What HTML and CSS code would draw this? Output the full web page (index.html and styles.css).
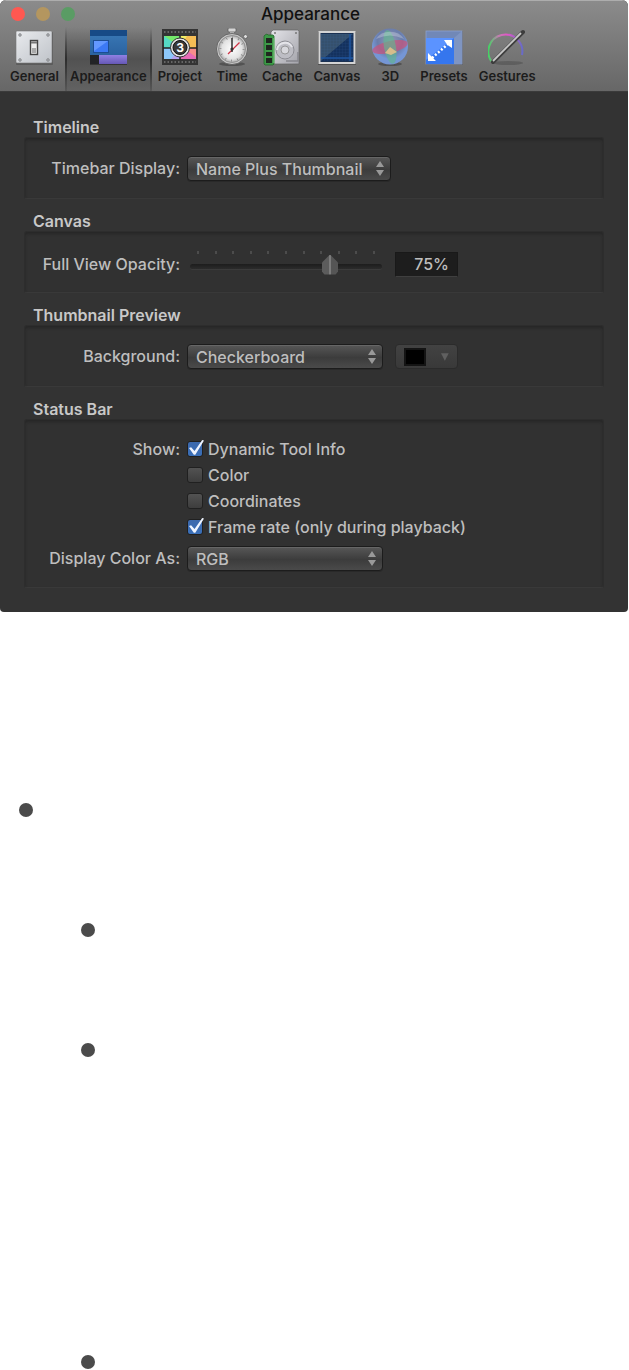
FILE: index.html
```html
<!DOCTYPE html>
<html lang="en">
<head>
    <meta charset="UTF-8">
    <meta name="viewport" content="width=device-width, initial-scale=1.0">
    <title>Appearance</title>
    <link rel="stylesheet" href="styles.css">
</head>
<body>
    <!-- Preferences Window -->
    <main class="window">
        <header class="window-header">
            <div class="titlebar">
                <div class="lights">
                    <button class="light close" aria-label="Close"></button>
                    <button class="light minimize" aria-label="Minimize"></button>
                    <button class="light expand" aria-label="Zoom"></button>
                </div>
                <h1>Appearance</h1>
            </div>

            <!-- Toolbar -->
            <nav class="toolbar">
                <button class="tool">
                    <svg viewBox="0 0 38 38">
                        <defs>
                            <linearGradient id="plate" x2="1" y2="1"><stop stop-color="#e9ebee"/><stop offset="1" stop-color="#bfc3c9"/></linearGradient>
                        </defs>
                        <rect x="1" y="4" width="37" height="33" rx="1" fill="#444" opacity=".5"/>
                        <rect x="1" y="3" width="36" height="32" rx="1" fill="url(#plate)" stroke="#777" stroke-width=".6"/>
                        <g fill="#a4a8ae" stroke="#777" stroke-width=".5"><circle cx="5" cy="7" r="1.4"/><circle cx="33" cy="7" r="1.4"/><circle cx="5" cy="32" r="1.4"/><circle cx="33" cy="32" r="1.4"/></g>
                        <rect x="15.500" y="12.500" width="7" height="14" fill="#eee" stroke="#444" stroke-width="1.4"/>
                        <rect x="17" y="20" width="4" height="5" fill="#aaa"/>
                        <path d="M16 14.500h6" stroke="#777" stroke-width="2"/>
                    </svg>
                    General
                </button>
                <button class="tool selected" aria-pressed="true">
                    <svg viewBox="0 0 38 38">
                        <defs>
                            <linearGradient id="pane" x2="0" y2="1"><stop stop-color="#3b7ab8"/><stop offset="1" stop-color="#255a97"/></linearGradient>
                            <linearGradient id="strip" x2="0" y2="1"><stop stop-color="#9080e4"/><stop offset="1" stop-color="#6658b4"/></linearGradient>
                        </defs>
                        <rect x="1" y="3" width="37" height="34" fill="#222" opacity=".6"/>
                        <rect x="1" y="2" width="37" height="34" fill="url(#pane)"/>
                        <rect x="1" y="2" width="37" height="6" fill="#174a86"/>
                        <rect x="4" y="12" width="16" height="13" fill="#1d4d93"/>
                        <rect x="5" y="13" width="14" height="11" fill="#3c79f5"/>
                        <path d="M5 13h14L5 23z" fill="#6398ff"/>
                        <rect x="1" y="27" width="9" height="9" fill="#222326"/>
                        <rect x="10" y="27" width="28" height="9" fill="url(#strip)"/>
                    </svg>
                    Appearance
                </button>
                <button class="tool">
                    <svg viewBox="0 0 38 38">
                        <rect x="1" y="1" width="36" height="36" fill="#343434"/>
                        <path d="M3 4h32M3 34h32" stroke="#666" stroke-width="2" stroke-dasharray="1.5 2"/>
                        <path d="M3 8h16v12H3z" fill="#55d9c5"/>
                        <path d="M19 8h16v12H19z" fill="#f5bd55"/>
                        <path d="M3 20h16v11H3z" fill="#8dc8fa"/>
                        <path d="M19 20h16v11H19z" fill="#e66bb7"/>
                        <path d="M3 8l16 11V8z" fill="#75e96c"/>
                        <path d="M19 8l7 0-7 11z" fill="#f0ed65"/>
                        <path d="M35 20H22l13 9z" fill="#f78d8b"/>
                        <path d="M19 20v11h-9z" fill="#b6a2f0"/>
                        <path d="M2 20h34M19 7v25" stroke="#222" stroke-width="1.500"/>
                        <circle cx="19" cy="19.500" r="9.500" fill="#e4e4e4" stroke="#333"/>
                        <circle cx="19" cy="19.500" r="7" fill="#383838" stroke="#111"/>
                        <text x="19" y="24" class="countdown">3</text>
                    </svg>
                    Project
                </button>
                <button class="tool">
                    <svg viewBox="0 0 38 38">
                        <defs>
                            <radialGradient id="dial"><stop stop-color="#fff"/><stop offset=".75" stop-color="#e2e2e2"/><stop offset="1" stop-color="#aaa"/></radialGradient>
                        </defs>
                        <ellipse cx="19" cy="36" rx="13" ry="2" fill="#333" opacity=".5"/>
                        <path d="M31 10l3-3" stroke="#bbb" stroke-width="3"/>
                        <circle cx="32.500" cy="8.500" r="2" fill="#ddd" stroke="#555" stroke-width=".8"/>
                        <rect x="15" y="0" width="8" height="4" rx="1" fill="#d5d5d5" stroke="#555" stroke-width=".7"/>
                        <rect x="17" y="4" width="4" height="3" fill="#aaa"/>
                        <circle cx="19" cy="21" r="15.500" fill="#c7c7c7" stroke="#555" stroke-width=".8"/>
                        <circle cx="19" cy="21" r="13.500" fill="url(#dial)" stroke="#777" stroke-width=".6"/>
                        <circle cx="19" cy="21" r="11.500" fill="none" stroke="#777" stroke-width="2" stroke-dasharray=".7 5.320"/>
                        <path d="M15 26L26.500 14.500" stroke="#cf3446" stroke-width="1.300"/>
                        <path d="M19 24V10" stroke="#222" stroke-width="1.400"/>
                        <circle cx="19" cy="21" r="1.600" fill="#333"/>
                    </svg>
                    Time
                </button>
                <button class="tool">
                    <svg viewBox="0 0 38 38">
                        <defs>
                            <linearGradient id="disk" x2="1" y2="1"><stop stop-color="#e4e4e9"/><stop offset="1" stop-color="#a3a3aa"/></linearGradient>
                        </defs>
                        <path d="M10 2h25l1 1v33H8V4z" fill="url(#disk)" stroke="#666" stroke-width=".7"/>
                        <circle cx="22" cy="22" r="9" fill="#bdbdc4" stroke="#8c8c93"/>
                        <path d="M14 22a8 8 0 0 1 15-3" fill="none" stroke="#e4e4e9" stroke-width="2"/>
                        <circle cx="22" cy="22" r="4" fill="#d8d8dd" stroke="#888" stroke-width=".8"/>
                        <path d="M23 33h12v-9" fill="none" stroke="#86868d" stroke-width="1.500"/>
                        <g fill="#777"><circle cx="12" cy="5" r="1"/><circle cx="33" cy="5" r="1"/></g>
                        <path d="M2 7l2-1 1 1h5l1 1v28l-1 1H2l-1-1V8z" fill="#3d9a48" stroke="#24682c" stroke-width=".8"/>
                        <path d="M11 10v25" stroke="#7bc67f" stroke-width="1.200"/>
                        <path d="M3 10h6v5H3zM3 17h6v5H3zM3 24h6v4H3zM3 30h6v5H3z" fill="#202820"/>
                    </svg>
                    Cache
                </button>
                <button class="tool">
                    <svg viewBox="0 0 38 38">
                        <defs>
                            <pattern id="mesh" width="3" height="3" patternUnits="userSpaceOnUse"><path d="M0 0h3M0 0v3" stroke="#3f6fa9" stroke-width=".6"/></pattern>
                        </defs>
                        <rect x="0" y="4" width="38" height="33" fill="#333" opacity=".5"/>
                        <rect x="1.500" y="4" width="35" height="31" fill="#1b3152" stroke="#d4d4d4" stroke-width="2"/>
                        <path d="M3 6h32L3 33z" fill="#35506d"/>
                        <path d="M35 6v27H3z" fill="#14325f"/>
                        <rect x="3" y="6" width="32" height="27" fill="url(#mesh)" opacity=".3"/>
                        <path d="M32 6v27M3 30h32" stroke="#1e56a0" stroke-width="1.500"/>
                    </svg>
                    Canvas
                </button>
                <button class="tool">
                    <svg viewBox="0 0 38 38">
                        <defs>
                            <radialGradient id="orb" cy=".35"><stop stop-color="#9299b5"/><stop offset=".7" stop-color="#6a7dab"/><stop offset="1" stop-color="#7596d5"/></radialGradient>
                        </defs>
                        <ellipse cx="19" cy="36" rx="12" ry="2" fill="#333" opacity=".5"/>
                        <circle cx="19" cy="18.500" r="18" fill="url(#orb)"/>
                        <ellipse cx="19" cy="19" rx="18" ry="6" fill="#c9527a" opacity=".7" transform="rotate(-13 19 19)"/>
                        <ellipse cx="19" cy="19" rx="6" ry="17" fill="#61b58f" opacity=".65" transform="rotate(-10 19 19)"/>
                        <path d="M14 25l5-6 7 5-6 3z" fill="#efc58b" opacity=".8"/>
                        <path d="M5 11a16 14 0 0 1 28 0Q19 4 5 11z" fill="#fff" opacity=".25"/>
                    </svg>
                    3D
                </button>
                <button class="tool">
                    <svg viewBox="0 0 38 38">
                        <rect x="1" y="3" width="37" height="34" fill="#444" opacity=".4"/>
                        <rect x="1" y="3" width="36" height="33" fill="#7188b7" stroke="#8ca1ce" stroke-width=".8"/>
                        <path d="M29 10l8-7v33h-8z" fill="#7f95c2"/>
                        <rect x="1" y="10" width="28" height="26" fill="#3576ee"/>
                        <path d="M1 10h28L1 32z" fill="#5b93ff"/>
                        <path d="M7 30L23 16" stroke="#fff" stroke-width="2.500" stroke-dasharray="2 2"/>
                        <path d="M19 12h8v8l-3-2-3-3zM3 25v8h8l-3-3-2-2z" fill="#fff"/>
                    </svg>
                    Presets
                </button>
                <button class="tool">
                    <svg viewBox="0 0 38 38">
                        <defs>
                            <linearGradient id="arc" x2="1"><stop stop-color="#43d463"/><stop offset=".3" stop-color="#c27db0"/><stop offset=".55" stop-color="#e456c8"/><stop offset="1" stop-color="#686bc8"/></linearGradient>
                        </defs>
                        <ellipse cx="20" cy="35" rx="15" ry="2" fill="#333" opacity=".3"/>
                        <path d="M4 34A17 17 0 1 1 34 27" fill="none" stroke="url(#arc)" stroke-width="2"/>
                        <path d="M5 34L35 4" stroke="#3d3d3d" stroke-width="4" stroke-linecap="round"/>
                        <path d="M5 33L33 5" stroke="#c8c8c8" stroke-width="1.800"/>
                    </svg>
                    Gestures
                </button>
            </nav>
        </header>

        <!-- Settings -->
        <form class="settings">
            <section>
                <h2>Timeline</h2>
                <div class="group">
                    <div class="row">
                        <label for="timebar">Timebar Display:</label>
                        <div class="popup wide">
                            <select id="timebar"><option>Name Plus Thumbnail</option></select>
                            <svg viewBox="0 0 8 15"><path d="M0 6l4-6 4 6zM0 9h8l-4 6z"/></svg>
                        </div>
                    </div>
                </div>
            </section>

            <section>
                <h2>Canvas</h2>
                <div class="group slider-group">
                    <div class="row">
                        <label for="opacity">Full View Opacity:</label>
                        <div class="slider">
                            <div class="ticks"><i></i><i></i><i></i><i></i><i></i><i></i><i></i><i></i><i></i><i></i><i></i></div>
                            <input type="range" id="opacity" min="0" max="100" value="75">
                        </div>
                        <input type="text" class="number" value="75%" aria-label="Opacity value">
                    </div>
                </div>
            </section>

            <section>
                <h2>Thumbnail Preview</h2>
                <div class="group">
                    <div class="row">
                        <label for="background">Background:</label>
                        <div class="popup">
                            <select id="background"><option>Checkerboard</option></select>
                            <svg viewBox="0 0 8 15"><path d="M0 6l4-6 4 6zM0 9h8l-4 6z"/></svg>
                        </div>
                        <button type="button" class="color-well" aria-label="Background color" disabled>
                            <span class="swatch"></span>
                            <svg viewBox="0 0 8 8"><path d="M0 0h8L4 8z"/></svg>
                        </button>
                    </div>
                </div>
            </section>

            <section>
                <h2>Status Bar</h2>
                <div class="group status-group">
                    <div class="row check-row">
                        <span class="row-label">Show:</span>
                        <label class="check"><input type="checkbox" checked>Dynamic Tool Info</label>
                    </div>
                    <div class="row check-row">
                        <label class="check"><input type="checkbox">Color</label>
                    </div>
                    <div class="row check-row">
                        <label class="check"><input type="checkbox">Coordinates</label>
                    </div>
                    <div class="row check-row">
                        <label class="check"><input type="checkbox" checked>Frame rate (only during playback)</label>
                    </div>
                    <div class="row last-row">
                        <label for="colorAs">Display Color As:</label>
                        <div class="popup">
                            <select id="colorAs"><option>RGB</option></select>
                            <svg viewBox="0 0 8 15"><path d="M0 6l4-6 4 6zM0 9h8l-4 6z"/></svg>
                        </div>
                    </div>
                </div>
            </section>
        </form>
    </main>

    <!-- Notes -->
    <ul class="notes">
        <li>
            <ul>
                <li></li>
                <li class="long"></li>
                <li></li>
            </ul>
        </li>
    </ul>
</body>
</html>
```
FILE: styles.css
```css
/* General Styles */
* {
    box-sizing: border-box;
}

body {
    margin: 0;
    font-family: Inter, "Liberation Sans", sans-serif;
    font-size: 16px;
    font-weight: 500;
    background: #fff;
}

button, input, select {
    font: inherit;
    color: inherit;
}

/* Window */
.window {
    margin-right: 1px;
    border-radius: 6px 6px 4px 4px;
    background: #333;
    color: #bebebe;
    overflow: hidden;
}

.window-header {
    border-top: 1px solid #adadad;
    border-bottom: 1px solid #3b3b3b;
    background: linear-gradient(#8b8b8b, #676767);
    color: #1c1c1c;
}

.titlebar {
    display: grid;
    grid-template-columns: 1fr auto 1fr;
    align-items: center;
    height: 26px;
    padding: 0 18px 0 11px;
}

.titlebar h1 {
    margin: 0;
    font-size: 17px;
    font-weight: 500;
    line-height: 26px;
    color: #111;
}

.lights {
    display: flex;
    gap: 11px;
}

.light {
    width: 14px;
    height: 14px;
    padding: 0;
    border: none;
    border-radius: 50%;
}

.close {
    background: #ff5851;
}

.minimize {
    background: #b4965f;
}

.expand {
    background: #5a9c64;
}

/* Toolbar */
.toolbar {
    display: flex;
    gap: 1px;
    height: 64px;
    padding-left: 5px;
}

.tool {
    display: flex;
    flex-direction: column;
    align-items: center;
    min-width: 48px;
    padding: 1px 5px 0;
    border: none;
    background: none;
    font-size: 13px;
    font-weight: 600;
    line-height: 20px;
}

.tool svg {
    width: 38px;
    height: 38px;
}

.tool.selected {
    background:
        linear-gradient(transparent, rgba(0, 0, 0, 0.45) 50%, rgba(0, 0, 0, 0.1)) left / 2px 100% no-repeat,
        linear-gradient(transparent, rgba(0, 0, 0, 0.45) 50%, rgba(0, 0, 0, 0.1)) right / 2px 100% no-repeat,
        linear-gradient(transparent, rgba(0, 0, 0, 0.3) 50%, rgba(0, 0, 0, 0.05));
}

.countdown {
    font-size: 12px;
    font-weight: 700;
    text-anchor: middle;
    fill: #fff;
}

/* Settings */
.settings {
    display: flex;
    flex-direction: column;
    gap: 12px;
    padding: 25px 24px 24px;
}

.settings h2 {
    margin: 0;
    padding-left: 9px;
    font-size: 16px;
    font-weight: 600;
    line-height: 20px;
    color: #c8c8c8;
}

.group {
    padding: 18px 0 17px;
    border: 1px solid #2d2d2d;
    border-bottom-color: #393939;
    border-radius: 3px;
    background: #313131;
    box-shadow: inset 0 2px 3px #272727;
}

.row {
    display: grid;
    grid-template-columns: 155px auto auto;
    justify-content: start;
    align-items: center;
    column-gap: 7px;
    line-height: 25px;
}

.row > label:first-child,
.row-label {
    text-align: right;
}

.slider-group {
    padding: 19px 0 15px;
}

.status-group {
    padding: 16px 0;
}

.check-row {
    height: 26px;
}

.last-row {
    margin-top: 6px;
}

/* Pop-up Menus */
.popup {
    position: relative;
    width: 196px;
    height: 25px;
}

.popup.wide {
    width: 204px;
}

.popup select {
    display: block;
    width: 100%;
    height: 25px;
    padding: 0 24px 0 8px;
    border: 1px solid #1c1c1c;
    border-radius: 4px;
    appearance: none;
    background: linear-gradient(#575757, #3c3c3c 55%, #4a4a4a);
    box-shadow: inset 0 1px 0 #666, 0 1px 0 #292929;
}

.popup svg {
    position: absolute;
    top: 5px;
    right: 7px;
    width: 8px;
    height: 15px;
    fill: #999;
    pointer-events: none;
}

.popup + .color-well,
.slider + .number {
    margin-left: 5px;
}

/* Slider */
.slider {
    width: 196px;
    height: 26px;
    padding: 0 1px 0 3px;
}

.ticks {
    display: flex;
    justify-content: space-between;
    height: 4px;
    padding: 0 7px;
}

.ticks i {
    width: 2px;
    height: 3px;
    background: #4c4c4c;
}

.slider input {
    display: block;
    width: 100%;
    height: 22px;
    margin: 0;
    appearance: none;
    background: none;
}

.slider input::-webkit-slider-runnable-track {
    height: 5px;
    border-radius: 3px;
    background: linear-gradient(#1d1d1d, #2b2b2b);
    box-shadow: 0 1px 0 #3b3b3b;
}

.slider input::-webkit-slider-thumb {
    width: 16px;
    height: 20px;
    margin-top: -9px;
    appearance: none;
    border-radius: 3px;
    background: linear-gradient(90deg, #5c5c5c 45%, #7c7c7c 45%, #7c7c7c 55%, #555 55%);
    clip-path: polygon(50% 0, 100% 40%, 100% 85%, 85% 100%, 15% 100%, 0 85%, 0 40%);
}

.number {
    width: 63px;
    height: 25px;
    padding: 0 8px;
    border: 1px solid #191919;
    border-bottom-color: #3f3f3f;
    background: #1d1d1d;
    text-align: right;
}

/* Color Well */
.color-well {
    display: flex;
    align-items: center;
    gap: 15px;
    width: 63px;
    height: 25px;
    padding: 0 8px;
    border: 1px solid #2b2b2b;
    border-radius: 4px;
    background: linear-gradient(#424242, #393939);
}

.swatch {
    width: 23px;
    height: 18px;
    border: 2px solid #141414;
    background: #000;
}

.color-well svg {
    width: 8px;
    height: 8px;
    fill: #606060;
}

/* Checkboxes */
.check {
    display: flex;
    align-items: center;
    grid-column: 2;
    gap: 5px;
    white-space: nowrap;
}

.check input {
    position: relative;
    width: 16px;
    height: 16px;
    margin: 0;
    border: 1px solid #202020;
    border-radius: 3px;
    appearance: none;
    background: linear-gradient(#525252, #3d3d3d);
}

.check input:checked {
    background: linear-gradient(#3c69ad, #3a6fb8);
}

.check input:checked::after {
    content: "";
    position: absolute;
    left: 1px;
    top: -2px;
    width: 15px;
    height: 15px;
    background: #eef4ff;
    clip-path: polygon(0 54%, 14% 48%, 37% 74%, 88% 0, 100% 3%, 42% 98%, 32% 98%);
}

/* Notes */
.notes,
.notes ul {
    margin: 0;
    padding: 0;
    list-style: none;
}

.notes {
    padding: 191px 19px 0;
}

.notes ul {
    padding: 106px 0 0 62px;
}

.notes li::before {
    content: "";
    display: block;
    width: 14px;
    height: 14px;
    margin-bottom: 106px;
    border-radius: 50%;
    background: #4b4b4b;
}

.notes > li::before {
    margin-bottom: 0;
}

.notes .long::before {
    margin-bottom: 298px;
}

.notes ul li:last-child::before {
    margin-bottom: 1px;
}
```
